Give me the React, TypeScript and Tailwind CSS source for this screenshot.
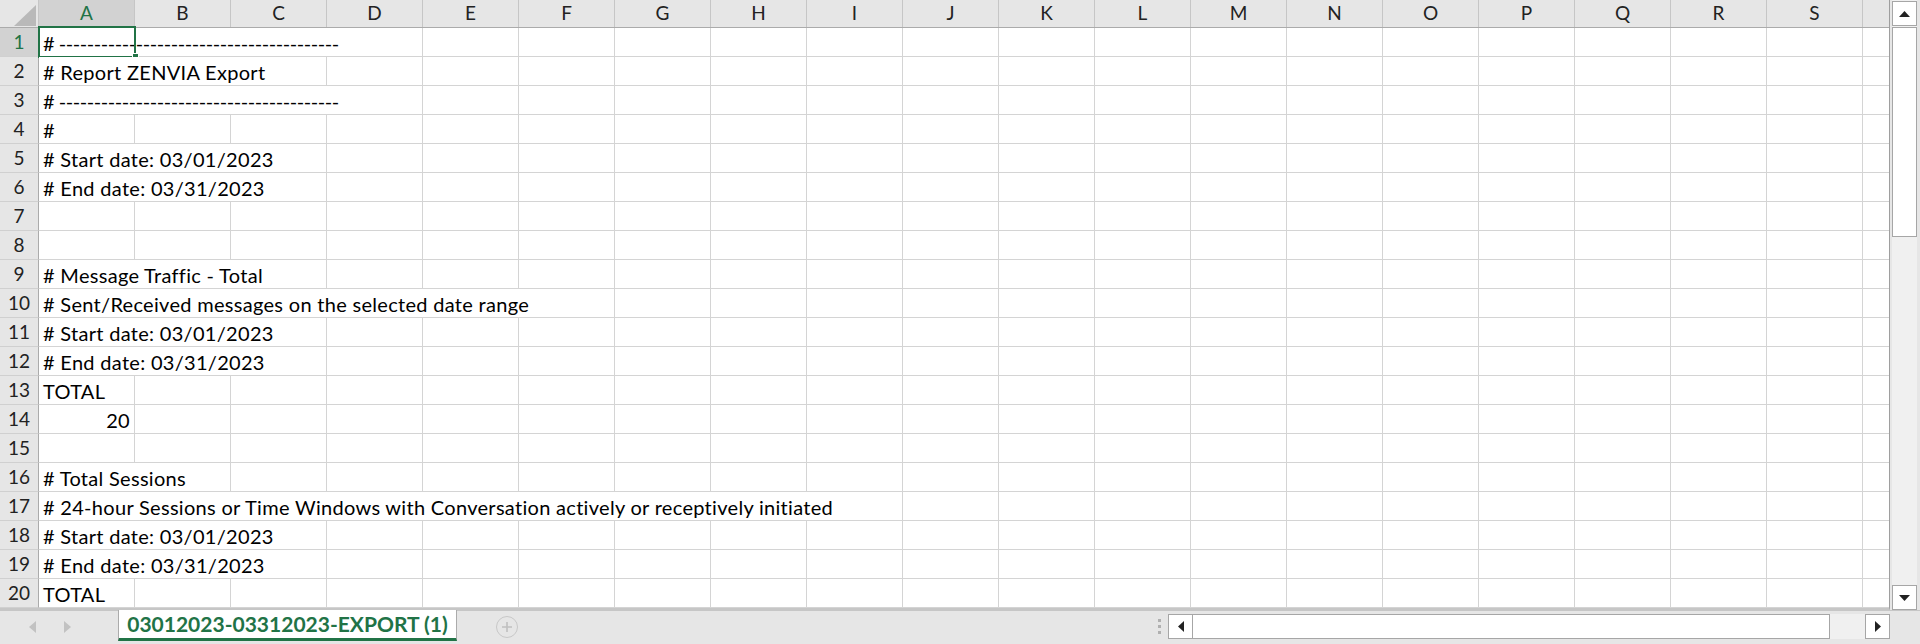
import React from "react";

const COLS = "ABCDEFGHIJKLMNOPQRS".split("");
const DASHES = "# " + "-".repeat(40);

type Row = { text: string; span: number; right?: boolean; dash?: boolean };

const ROWS: Row[] = [
  { text: DASHES, span: 4, dash: true },
  { text: "# Report ZENVIA Export", span: 3 },
  { text: DASHES, span: 4, dash: true },
  { text: "#", span: 1 },
  { text: "# Start date: 03/01/2023", span: 3 },
  { text: "# End date: 03/31/2023", span: 3 },
  { text: "", span: 1 },
  { text: "", span: 1 },
  { text: "# Message Traffic - Total", span: 3 },
  { text: "# Sent/Received messages on the selected date range", span: 6 },
  { text: "# Start date: 03/01/2023", span: 3 },
  { text: "# End date: 03/31/2023", span: 3 },
  { text: "TOTAL", span: 1 },
  { text: "20", span: 1, right: true },
  { text: "", span: 1 },
  { text: "# Total Sessions", span: 2 },
  { text: "# 24-hour Sessions or Time Windows with Conversation actively or receptively initiated", span: 9 },
  { text: "# Start date: 03/01/2023", span: 3 },
  { text: "# End date: 03/31/2023", span: 3 },
  { text: "TOTAL", span: 1 },
];

const SPAN_W: Record<number, string> = {
  1: "w-[96px]",
  2: "w-[192px]",
  3: "w-[288px]",
  4: "w-[384px]",
  6: "w-[576px]",
  9: "w-[864px]",
};

function HeaderRow() {
  return (
    <div className="flex h-[28px] border-b border-[#ababab] bg-[#e6e6e6]">
      {/* corner */}
      <div className="relative w-[39px] shrink-0 border-r border-[#c6c6c6]">
        <svg className="absolute left-[14px] top-[5px]" width="22" height="21" viewBox="0 0 22 21">
          <polygon points="22,0 22,21 0,21" fill="#b9b9b9" />
        </svg>
      </div>
      {COLS.map((c) => (
        <div
          key={c}
          className={
            "flex w-[96px] shrink-0 items-center justify-center border-r border-[#c6c6c6] text-[19px] " +
            (c === "A" ? "bg-[#d2d2d2] text-[#217346]" : "text-[#222]")
          }
        >
          {c}
        </div>
      ))}
      <div className="w-[26px] shrink-0" />
    </div>
  );
}

function DataRow({ row, index }: { row: Row; index: number }) {
  const rest = 19 - row.span;
  const selected = index === 0;
  return (
    <div className="flex h-[29px]">
      <div
        className={
          "flex w-[39px] shrink-0 items-center justify-center border-r border-b border-r-[#ababab] border-b-[#d0d0d0] text-[19px] " +
          (selected ? "bg-[#d2d2d2] text-[#217346]" : "bg-[#e6e6e6] text-[#222]")
        }
      >
        {index + 1}
      </div>
      <div
        className={
          "relative flex shrink-0 items-center whitespace-nowrap border-r border-b border-[#d4d4d4] bg-white pt-[1px] text-[20px] text-black " +
          SPAN_W[row.span] +
          (row.dash ? " tracking-[-0.43px]" : " tracking-[0.3px]") +
          (row.right ? " justify-end pr-[4px]" : " pl-[4px]")
        }
      >
        {row.text}
        {selected && (
          <div className="absolute left-[-1px] top-[-2px] h-[32px] w-[98px] border-2 border-[#217346]">
            <div className="absolute bottom-[-4px] right-[-5px] h-[7px] w-[7px] border border-white bg-[#217346]" />
          </div>
        )}
      </div>
      {Array.from({ length: rest }).map((_, i) => (
        <div key={i} className="w-[96px] shrink-0 border-r border-b border-[#d4d4d4] bg-white" />
      ))}
      <div className="w-[26px] shrink-0 border-b border-[#d4d4d4] bg-white" />
    </div>
  );
}

function VScroll() {
  return (
    <div className="flex h-[610px] w-[30px] shrink-0 bg-[#e6e6e6] pl-[2px]">
      <div className="flex w-[25px] flex-col bg-[#f0f0f0]">
        <div className="mt-[1px] flex h-[25px] items-center justify-center border border-[#a6a6a6] bg-white">
          <svg width="11" height="6" viewBox="0 0 11 6">
            <polygon points="5.5,0 11,6 0,6" fill="#222" />
          </svg>
        </div>
        <div className="mt-[1px] h-[210px] border border-[#a6a6a6] bg-white" />
        <div className="flex-1" />
        <div className="flex h-[25px] items-center justify-center border border-[#a6a6a6] bg-white">
          <svg width="11" height="6" viewBox="0 0 11 6">
            <polygon points="0,0 11,0 5.5,6" fill="#222" />
          </svg>
        </div>
      </div>
    </div>
  );
}

function BottomBar() {
  return (
    <div className="flex h-[34px] items-start border-t border-[#c6c6c6] bg-[#e6e6e6]">
      {/* sheet nav arrows */}
      <div className="flex h-[31px] w-[118px] shrink-0 items-center gap-[28px] pl-[29px]">
        <svg width="7" height="12" viewBox="0 0 7 12">
          <polygon points="7,0 7,12 0,6" fill="#c2c2c2" />
        </svg>
        <svg width="7" height="12" viewBox="0 0 7 12">
          <polygon points="0,0 7,6 0,12" fill="#c2c2c2" />
        </svg>
      </div>
      {/* active sheet tab */}
      <div className="mt-[-1px] flex h-[31px] w-[339px] shrink-0 items-center justify-center border-x border-[#ababab] border-b-[3px] border-b-[#217346] bg-white text-[21px] font-bold text-[#217346]">
        03012023-03312023-EXPORT (1)
      </div>
      {/* new sheet button */}
      <div className="flex h-[31px] w-[100px] shrink-0 items-center pl-[39px]">
        <div className="flex h-[22px] w-[22px] items-center justify-center rounded-full border-[1.5px] border-[#c8c8c8]">
          <svg width="12" height="12" viewBox="0 0 12 12">
            <path d="M6 1v10M1 6h10" stroke="#c0c0c0" strokeWidth="1.6" />
          </svg>
        </div>
      </div>
      <div className="flex-1" />
      {/* splitter dots */}
      <div className="flex h-[31px] w-[18px] shrink-0 flex-col items-center justify-center gap-[3px]">
        <div className="h-[3px] w-[3px] bg-[#b0b0b0]" />
        <div className="h-[3px] w-[3px] bg-[#b0b0b0]" />
        <div className="h-[3px] w-[3px] bg-[#b0b0b0]" />
      </div>
      {/* horizontal scrollbar */}
      <div className="mr-[30px] mt-[3px] flex h-[25px] w-[722px] shrink-0 bg-[#f0f0f0]">
        <div className="flex w-[25px] items-center justify-center border border-[#a6a6a6] bg-white">
          <svg width="6" height="11" viewBox="0 0 6 11">
            <polygon points="6,0 6,11 0,5.5" fill="#222" />
          </svg>
        </div>
        <div className="w-[637px] border border-l-0 border-[#a6a6a6] bg-white" />
        <div className="flex-1" />
        <div className="flex w-[25px] items-center justify-center border border-[#a6a6a6] bg-white">
          <svg width="6" height="11" viewBox="0 0 6 11">
            <polygon points="0,0 6,5.5 0,11" fill="#222" />
          </svg>
        </div>
      </div>
    </div>
  );
}

export default function App() {
  return (
    <div className="flex h-[644px] w-[1920px] flex-col overflow-hidden bg-[#e6e6e6] font-['Lato',sans-serif]">
      <div className="flex h-[610px]">
        <div className="flex h-[610px] w-[1890px] shrink-0 flex-col overflow-hidden border-r border-b-2 border-r-[#9e9e9e] border-b-[#c6c6c6] bg-white">
          <HeaderRow />
          {ROWS.map((r, i) => (
            <DataRow key={i} row={r} index={i} />
          ))}
        </div>
        <VScroll />
      </div>
      <BottomBar />
    </div>
  );
}
